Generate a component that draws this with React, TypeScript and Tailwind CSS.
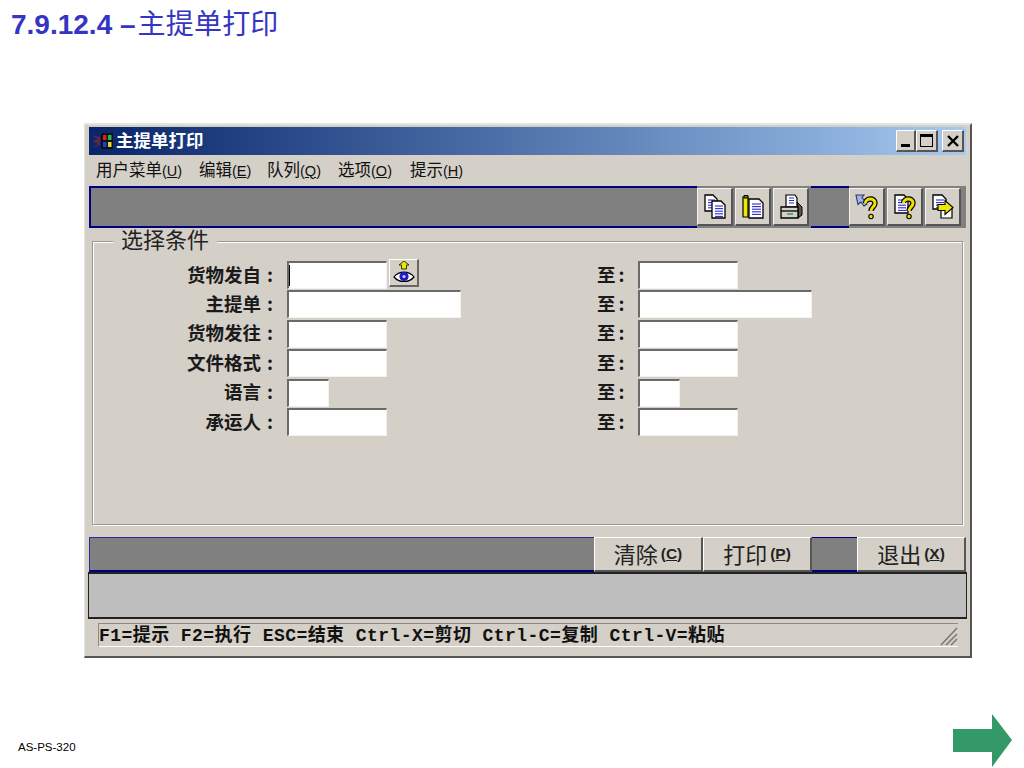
import React from "react";

const cjk = "font-['Noto_Sans_CJK_SC',sans-serif]";

function DocLines({ x, y, w = 13, h = 17 }: { x: number; y: number; w?: number; h?: number }) {
    const fold = 4;
    const lines = [];
    for (let ly = y + 5; ly < y + h - 1; ly += 2.6) {
        lines.push(<path key={ly} d={`M${x + 3} ${ly}H${x + w - 2}`} stroke="#2a2ad0" strokeWidth="1.1" />);
    }
    return (
        <g>
            <path
                d={`M${x} ${y}H${x + w - fold}L${x + w} ${y + fold}V${y + h}H${x}Z`}
                fill="#ffffff"
                stroke="#000000"
                strokeWidth="1.3"
            />
            {lines}
        </g>
    );
}

function Question({ x, y }: { x: number; y: number }) {
    return (
        <g transform={`translate(${x} ${y})`}>
            <path d="M2.5 6C2.5 1 12 0.5 12 6C12 10 8 10 8 14" fill="none" stroke="#000000" strokeWidth="5.4" />
            <path d="M2.5 6C2.5 1 12 0.5 12 6C12 10 8 10 8 14" fill="none" stroke="#f0e000" strokeWidth="3" />
            <circle cx="8" cy="19.5" r="2.2" fill="#f0e000" stroke="#000000" strokeWidth="1.1" />
        </g>
    );
}

function CopyIcon() {
    return (
        <svg width="24" height="26" viewBox="0 0 24 26">
            <DocLines x={2} y={1} w={12} h={16} />
            <DocLines x={9} y={7} w={13} h={17} />
        </svg>
    );
}

function PasteIcon() {
    return (
        <svg width="24" height="26" viewBox="0 0 24 26">
            <path d="M2 3H7V23H2Z" fill="#f0e800" stroke="#000000" strokeWidth="1.2" />
            <path d="M3 1.5H7V4H3Z" fill="#808000" stroke="#000000" strokeWidth="1" />
            <DocLines x={8} y={5} w={14} h={19} />
        </svg>
    );
}

function PrintIcon() {
    return (
        <svg width="24" height="26" viewBox="0 0 24 26">
            <path d="M7 1H16L18 4V13H7Z" fill="#ffffff" stroke="#000000" strokeWidth="1.2" />
            <path d="M10 4H15M10 6.5H15M10 9H15" stroke="#2a2ad0" strokeWidth="1.1" />
            <path d="M18 8L23 13V21L19 24V14Z" fill="#555555" stroke="#000000" strokeWidth="1" />
            <path d="M2 13H19V24H2Z" fill="#d4d0c8" stroke="#000000" strokeWidth="1.3" />
            <path d="M2 17H19" stroke="#000000" strokeWidth="1.3" />
            <path d="M8 20H14" stroke="#33a060" strokeWidth="1.6" />
        </svg>
    );
}

function PointerHelpIcon() {
    return (
        <svg width="24" height="26" viewBox="0 0 24 26">
            <path d="M1 1H9L7 3.5L10 7L12 10L9 12L6 8L3 10.5Z" fill="#9fb4ea" stroke="#333366" strokeWidth="1.1" />
            <Question x={8} y={3} />
        </svg>
    );
}

function DocHelpIcon() {
    return (
        <svg width="24" height="26" viewBox="0 0 24 26">
            <DocLines x={2} y={1} w={13} h={18} />
            <Question x={8} y={3} />
        </svg>
    );
}

function DocArrowIcon() {
    return (
        <svg width="24" height="26" viewBox="0 0 24 26">
            <DocLines x={2} y={1} w={13} h={14} />
            <path d="M10 13H21V24H10Z" fill="#ffffff" stroke="#000000" strokeWidth="1.2" />
            <path d="M7 10.5H14V6.5L22 13.5L14 20.5V16.5H7Z" fill="#f0e800" stroke="#000000" strokeWidth="1.1" />
        </svg>
    );
}

function EyeIcon() {
    return (
        <svg width="24" height="24" viewBox="0 0 24 24">
            <path d="M12 0L17 4H14.5V8H9.5V4H7Z" fill="#f0e800" stroke="#333300" strokeWidth="1" />
            <path d="M2 16C7 9.5 17 9.5 22 16C17 22 7 22 2 16Z" fill="#ffffff" stroke="#000000" strokeWidth="1.2" />
            <circle cx="12" cy="15.5" r="4.6" fill="#1c1cc0" />
            <circle cx="12" cy="15.5" r="1.6" fill="#c8c8ff" />
        </svg>
    );
}

function AppLogo() {
    return (
        <svg width="23" height="18" viewBox="0 0 23 18">
            <path d="M0 3L7 7L1 9L7 12L1 16L9 13V5Z" fill="#5a2a4a" />
            <rect x="10" y="1" width="12" height="16" fill="#101018" />
            <rect x="12" y="3" width="3.5" height="5" fill="#d82020" />
            <rect x="17" y="3" width="3.5" height="5" fill="#20c040" />
            <rect x="12" y="10" width="3.5" height="5" fill="#2040d0" />
            <rect x="17" y="10" width="3.5" height="5" fill="#e8d820" />
        </svg>
    );
}

function WinButton({ children, w }: { children: React.ReactNode; w: string }) {
    return (
        <div className={`${w} h-[22px] flex items-center justify-center bg-[#d4d0c8] border-t border-l border-t-white border-l-white border-r-2 border-b-2 border-r-[#555555] border-b-[#555555]`}>
            {children}
        </div>
    );
}

function MenuItem({ label, hot, w }: { label: string; hot: string; w: string }) {
    return (
        <div className={`${w} -mt-[2px] whitespace-nowrap text-[16.5px] text-[#111111] ${cjk}`}>
            {label}
            <span className="text-[14.5px] font-['Liberation_Sans',sans-serif]">
                (<span className="underline">{hot}</span>)
            </span>
        </div>
    );
}

function ToolButton({ children }: { children: React.ReactNode }) {
    return (
        <div className="w-[36px] h-[38px] flex items-center justify-center bg-[#d4d0c8] border-t border-l border-t-[#f4f2ee] border-l-[#f4f2ee] border-r-2 border-b-2 border-r-[#555555] border-b-[#555555]">
            {children}
        </div>
    );
}

function Field({ w }: { w: string }) {
    return <div className={`${w} h-[28px] bg-white border-t-2 border-l-2 border-t-[#6a6a6a] border-l-[#6a6a6a] border-r border-b border-r-[#f2f2ee] border-b-[#f2f2ee]`} />;
}

function FormRow({ label, w, first }: { label: string; w: string; first?: boolean }) {
    return (
        <div className="flex items-center h-[28px]">
            <div className={`w-[180px] -mt-[1px] flex justify-end text-[18.5px] font-bold text-[#1a1a1a] whitespace-nowrap ${cjk}`}>
                {label}
                <span className="w-[12px] text-right">:</span>
            </div>
            <div className="ml-[14px] w-[310px] flex items-center">
                <div className="relative">
                    <Field w={w} />
                    {first && <div className="absolute left-[2px] top-[4px] w-px h-[21px] bg-black" />}
                </div>
                {first && (
                    <div className="ml-[2px] -mt-[4px] w-[30px] h-[28px] flex items-center justify-center bg-[#d4d0c8] border-t border-l border-t-white border-l-white border-r-2 border-b-2 border-r-[#666666] border-b-[#666666]">
                        <EyeIcon />
                    </div>
                )}
            </div>
            <div className={`w-[28px] -mt-[1px] flex text-[18.5px] font-bold text-[#1a1a1a] whitespace-nowrap ${cjk}`}>
                至
                <span className="w-[9px] text-right">:</span>
            </div>
            <div className="ml-[13px]">
                <Field w={w} />
            </div>
        </div>
    );
}

function ActionButton({ label, hot, w }: { label: string; hot: string; w: string }) {
    return (
        <div className={`${w} h-[35px] flex items-center justify-center bg-[#d4d0c8] border-t border-l border-t-white border-l-white border-r-2 border-b-2 border-r-[#555555] border-b-[#555555] text-[#222222] text-[22px] ${cjk}`}>
            <span className="-mt-[2px]">{label}</span>
            <span className="ml-[3px] text-[15.5px] font-bold font-['Liberation_Sans',sans-serif]">
                (<span className="underline">{hot}</span>)
            </span>
        </div>
    );
}

function App() {
    return (
        <div className="w-[1024px] h-[768px] bg-white flex flex-col overflow-hidden">
            <div className="h-[123px] pl-[11px] pt-[4px] text-[28px] leading-[36px] text-[#3535c4] whitespace-nowrap font-['Liberation_Sans','Noto_Sans_CJK_SC',sans-serif]">
                <span className="font-bold">7.9.12.4 –</span>
                <span className={`ml-[2px] tracking-[0.2px] ${cjk}`}>主提单打印</span>
            </div>

            <div className="ml-[84px] w-[888px] h-[535px] bg-[#d4d0c8] border-t-2 border-l border-t-[#e6e4de] border-l-[#e6e4de] border-r-2 border-b-2 border-r-[#555555] border-b-[#555555] pl-[4px] pr-[4px] pt-[2px]">
                {/* title bar */}
                <div className="h-[28px] flex items-center bg-gradient-to-r from-[#0a246a] to-[#a6caf0] pl-[2px] pr-[2px]">
                    <AppLogo />
                    <div className={`ml-[2px] -mt-[1px] text-[17.5px] font-bold text-white ${cjk}`}>主提单打印</div>
                    <div className="ml-auto flex">
                        <WinButton w="w-[20px]">
                            <div className="mt-[9px] w-[9px] h-[3px] bg-black" />
                        </WinButton>
                        <WinButton w="w-[22px]">
                            <div className="w-[13px] h-[13px] border border-t-[3px] border-black" />
                        </WinButton>
                        <WinButton w="w-[22px] ml-[4px]">
                            <svg width="12" height="12" viewBox="0 0 12 12">
                                <path d="M1 1L11 11M11 1L1 11" stroke="#000000" strokeWidth="2.4" />
                            </svg>
                        </WinButton>
                    </div>
                </div>

                {/* menu */}
                <div className="h-[31px] flex items-center pl-[7px]">
                    <MenuItem label="用户菜单" hot="U" w="w-[103px]" />
                    <MenuItem label="编辑" hot="E" w="w-[68px]" />
                    <MenuItem label="队列" hot="Q" w="w-[71px]" />
                    <MenuItem label="选项" hot="O" w="w-[72px]" />
                    <MenuItem label="提示" hot="H" w="w-[60px]" />
                </div>

                {/* toolbar */}
                <div className="h-[42px] flex bg-[#808080]">
                    <div className="w-[608px] border-2 border-r-0 border-[#00007f]" />
                    <div className="flex items-center gap-[2px]">
                        <ToolButton><CopyIcon /></ToolButton>
                        <ToolButton><PasteIcon /></ToolButton>
                        <ToolButton><PrintIcon /></ToolButton>
                    </div>
                    <div className="w-[38px] ml-[2px] border-y-2 border-[#00007f]" />
                    <div className="flex items-center gap-[2px]">
                        <ToolButton><PointerHelpIcon /></ToolButton>
                        <ToolButton><DocHelpIcon /></ToolButton>
                        <ToolButton><DocArrowIcon /></ToolButton>
                    </div>
                </div>

                {/* selection group */}
                <div className="relative mt-[13px] mx-[3px] w-[871px] h-[284px] border border-[#9a9a94] shadow-[inset_1px_1px_0_#ffffff,1px_1px_0_#ffffff] pt-[19px]">
                    <div className={`absolute left-[20px] -top-[13px] px-[8px] bg-[#d4d0c8] text-[22px] leading-[18px] text-[#222222] ${cjk}`}>选择条件</div>
                    <div className="flex flex-col gap-[1.4px]">
                        <FormRow label="货物发自" w="w-[100px]" first />
                        <FormRow label="主提单" w="w-[174px]" />
                        <FormRow label="货物发往" w="w-[100px]" />
                        <FormRow label="文件格式" w="w-[100px]" />
                        <FormRow label="语言" w="w-[42px]" />
                        <FormRow label="承运人" w="w-[100px]" />
                    </div>
                </div>

                {/* action bar */}
                <div className="mt-[12px] h-[35px] flex bg-[#808080]">
                    <div className="w-[505px] border-t border-l border-[#2a2a9a] border-b-2 border-b-[#00007f]" />
                    <ActionButton label="清除" hot="C" w="w-[109px]" />
                    <ActionButton label="打印" hot="P" w="w-[109px]" />
                    <div className="w-[45px] border-t border-[#00007f] border-b-2 border-b-[#00007f]" />
                    <ActionButton label="退出" hot="X" w="w-[109px]" />
                </div>

                {/* message panel */}
                <div className="h-[47px] w-[879px] bg-[#bebebe] border-x border-b-2 border-t-2 border-[#222222] -ml-[1px]" />

                {/* status bar */}
                <div className="relative mt-[4px] ml-[9px] w-[860px] h-[24px] border-t border-l border-t-[#8a8a84] border-l-[#8a8a84] border-b border-b-white flex items-center">
                    <div className="mt-[2px] whitespace-nowrap text-[18px] font-bold text-[#111111] tracking-[0.44px] font-['Liberation_Mono','Noto_Sans_CJK_SC',monospace]">
                        F1=提示 F2=执行 ESC=结束 Ctrl-X=剪切 Ctrl-C=复制 Ctrl-V=粘贴
                    </div>
                    <svg className="absolute right-0 bottom-0" width="18" height="20" viewBox="0 0 18 20">
                        <path d="M1 19L17 2M6 19L17 8M11 19L17 13" stroke="#777777" strokeWidth="1.5" />
                    </svg>
                </div>
            </div>

            <div className="flex-1 flex items-end justify-between pl-[18px] pr-[12px] pb-[1px]">
                <div className="pb-[11px] text-[11.5px] text-black font-['Liberation_Sans',sans-serif]">AS-PS-320</div>
                <svg width="59" height="53" viewBox="0 0 59 53">
                    <path d="M0 15H39V0L59 26L39 53V38H0Z" fill="#339966" />
                </svg>
            </div>
        </div>
    );
}

export default App;
